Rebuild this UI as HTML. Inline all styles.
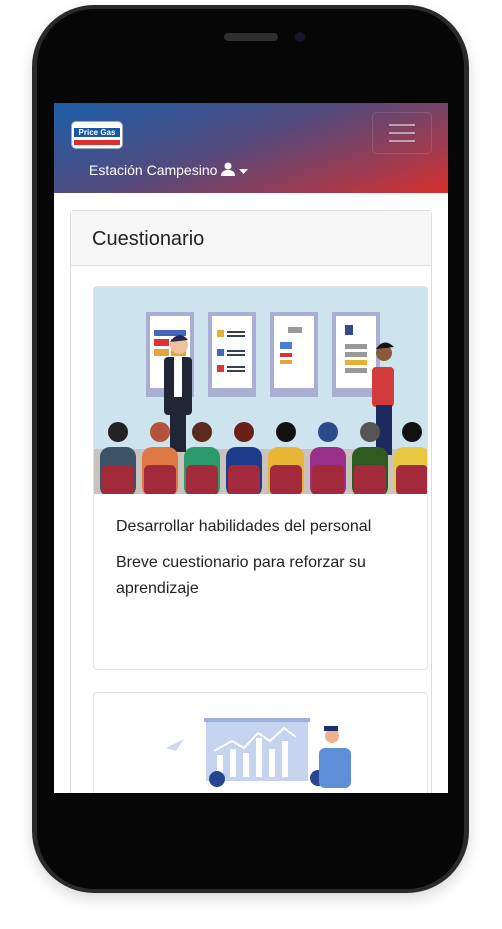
<!DOCTYPE html>
<html><head><meta charset="utf-8"><style>
body{margin:0;width:502px;height:929px;background:#fff;position:relative;overflow:hidden;font-family:"Liberation Sans",Arial,sans-serif}
.phone{position:absolute;left:32px;top:5px;width:437px;height:888px;border-radius:62px;background:#2a2a2a;box-shadow:0 6px 14px rgba(0,0,0,.15)}
.inner{position:absolute;left:5px;top:4px;right:5px;bottom:4px;border-radius:57px;background:#060606}
.spk{position:absolute;left:224px;top:33px;width:54px;height:8px;border-radius:4px;background:#2e2e2e}
.cam{position:absolute;left:295px;top:32px;width:10px;height:10px;border-radius:50%;background:#15152a}
.screen{position:absolute;left:54px;top:103px;width:394px;height:690px;background:#fff;overflow:hidden}
.hdr{height:90px;background:linear-gradient(160deg,#1d5fa8 0%,#524a7e 45%,#a33a4c 80%,#d9302c 100%);position:relative}
.logo{position:absolute;left:17px;top:18px;width:50px;height:26px;border-radius:5px;background:#fff;border:1px solid #9ab}
.logo i{position:absolute;left:2px;top:6px;right:2px;height:9px;background:#1856a6;color:#fff;font:bold 8px "Liberation Sans";font-style:normal;text-align:center;line-height:9px}
.logo b{position:absolute;left:2px;bottom:3px;right:2px;height:5px;background:#d8302a}
.tog{position:absolute;left:318px;top:9px;width:58px;height:40px;border:1px solid rgba(255,255,255,.12);border-radius:5px}
.tog span{position:absolute;left:16px;width:26px;height:2px;background:rgba(255,255,255,.5)}
.nav{position:absolute;left:35px;top:59px;color:#fff;font-size:14px}
.card{position:absolute;left:16px;top:107px;width:360px;height:600px;border:1px solid #ddd;border-radius:4px}
.ch{height:54px;background:#f7f7f7;border-bottom:1px solid #e3e3e3;font-size:20px;color:#222;padding-left:21px;line-height:56px}
.c1{position:absolute;left:39px;top:183px;width:333px;height:382px;border:1px solid #e3e3e3;border-radius:4px}
.img{position:absolute;left:0;top:0;width:333px;height:207px;background:#cde3ee;overflow:hidden}
.t{position:absolute;left:22px;font-size:16px;color:#222;line-height:26px}
.c2{position:absolute;left:39px;top:589px;width:333px;height:120px;border:1px solid #e3e3e3;border-radius:4px}
</style></head><body>
<div class="phone"><div class="inner"></div></div>
<div class="spk"></div><div class="cam"></div>
<div class="screen">
 <div class="hdr">
  <div class="logo"><i>Price Gas</i><b></b></div>
  <div class="tog"><span style="top:11px"></span><span style="top:19px"></span><span style="top:27px"></span></div>
  <div class="nav">Estación Campesino <svg width="14" height="14" viewBox="0 0 14 14" style="vertical-align:-1px"><circle cx="7" cy="4" r="3.5" fill="#fff"/><path d="M0 14 Q0 8 7 8 Q14 8 14 14Z" fill="#fff"/></svg> <svg width="9" height="6" viewBox="0 0 9 6"><path d="M0 0H9L4.5 5Z" fill="#fff"/></svg></div>
 </div>
 <div class="card"><div class="ch">Cuestionario</div></div>
 <div class="c1">
  <div class="img">
   <svg width="336" height="207" viewBox="0 0 336 207">
    <rect x="0" y="162" width="336" height="45" fill="#c9c3bb"/>
    <g fill="#a9aed3"><rect x="52" y="25" width="48" height="85"/><rect x="114" y="25" width="48" height="85"/><rect x="176" y="25" width="48" height="85"/><rect x="238" y="25" width="48" height="85"/></g>
    <g fill="#fff"><rect x="56" y="29" width="40" height="72"/><rect x="118" y="29" width="40" height="72"/><rect x="180" y="29" width="40" height="72"/><rect x="242" y="29" width="40" height="72"/></g>
    <rect x="60" y="43" width="32" height="6" fill="#4466bb"/><rect x="60" y="52" width="15" height="7" fill="#d33"/><rect x="77" y="52" width="15" height="7" fill="#d33"/><rect x="60" y="62" width="15" height="7" fill="#e8a23a"/><rect x="77" y="62" width="15" height="7" fill="#e8a23a"/>
    <rect x="123" y="43" width="7" height="7" fill="#e8b030"/><rect x="123" y="62" width="7" height="7" fill="#4466bb"/><rect x="123" y="78" width="7" height="7" fill="#d33"/>
    <g fill="#3a3f55"><rect x="133" y="44" width="18" height="2"/><rect x="133" y="48" width="18" height="2"/><rect x="133" y="63" width="18" height="2"/><rect x="133" y="67" width="18" height="2"/><rect x="133" y="79" width="18" height="2"/><rect x="133" y="83" width="18" height="2"/></g>
    <rect x="194" y="40" width="14" height="6" fill="#999"/><rect x="186" y="55" width="12" height="7" fill="#4a7fd0"/><rect x="186" y="66" width="12" height="4" fill="#d33"/><rect x="186" y="73" width="12" height="4" fill="#e8a23a"/>
    <rect x="251" y="38" width="8" height="10" fill="#334d8a"/><rect x="251" y="57" width="22" height="5" fill="#999"/><rect x="251" y="65" width="22" height="5" fill="#999"/><rect x="251" y="73" width="22" height="5" fill="#e8b030"/><rect x="251" y="81" width="22" height="5" fill="#999"/>
    <rect x="70" y="70" width="28" height="58" rx="4" fill="#202636"/><rect x="80" y="70" width="8" height="40" fill="#fff"/><circle cx="85" cy="58" r="9" fill="#f0c29c"/><path d="M76 55 Q85 42 94 53Z" fill="#2a2550"/><rect x="76" y="125" width="16" height="40" fill="#202636"/>
    <rect x="278" y="80" width="22" height="40" rx="4" fill="#d33a3c"/><circle cx="290" cy="66" r="8" fill="#8a5a3a"/><path d="M282 62 Q290 50 300 60Z" fill="#111"/><rect x="282" y="118" width="16" height="50" fill="#1d2a60"/>
    <g>
     <rect x="6" y="160" width="36" height="50" rx="10" fill="#3c5266"/><circle cx="24" cy="145" r="10" fill="#222"/>
     <rect x="48" y="160" width="36" height="50" rx="10" fill="#dd7a44"/><circle cx="66" cy="145" r="10" fill="#b5523a"/>
     <rect x="90" y="160" width="36" height="50" rx="10" fill="#2a9a6a"/><circle cx="108" cy="145" r="10" fill="#5a2a1a"/>
     <rect x="132" y="160" width="36" height="50" rx="10" fill="#1e3a8a"/><circle cx="150" cy="145" r="10" fill="#6a1f18"/>
     <rect x="174" y="160" width="36" height="50" rx="10" fill="#e8b535"/><circle cx="192" cy="145" r="10" fill="#111"/>
     <rect x="216" y="160" width="36" height="50" rx="10" fill="#9a2f8a"/><circle cx="234" cy="145" r="10" fill="#2a4a8a"/>
     <rect x="258" y="160" width="36" height="50" rx="10" fill="#2e5a20"/><circle cx="276" cy="145" r="10" fill="#555"/>
     <rect x="300" y="160" width="36" height="50" rx="10" fill="#e8c840"/><circle cx="318" cy="145" r="10" fill="#111"/>
    </g>
    <g fill="#a32a3a"><rect x="8" y="178" width="32" height="30" rx="5"/><rect x="50" y="178" width="32" height="30" rx="5"/><rect x="92" y="178" width="32" height="30" rx="5"/><rect x="134" y="178" width="32" height="30" rx="5"/><rect x="176" y="178" width="32" height="30" rx="5"/><rect x="218" y="178" width="32" height="30" rx="5"/><rect x="260" y="178" width="32" height="30" rx="5"/><rect x="302" y="178" width="32" height="30" rx="5"/></g>
   </svg>
  </div>
  <div class="t" style="top:227px">Desarrollar habilidades del personal</div>
  <div class="t" style="top:263px;width:300px">Breve cuestionario para reforzar su aprendizaje</div>
 </div>
 <div class="c2">
  <svg width="336" height="120" viewBox="0 0 336 120">
   <rect x="112" y="28" width="102" height="60" fill="#c5d3ee"/><rect x="110" y="25" width="106" height="4" fill="#9db0dc"/>
   <g fill="#fff"><rect x="123" y="62" width="6" height="22"/><rect x="136" y="56" width="6" height="28"/><rect x="149" y="60" width="6" height="24"/><rect x="162" y="45" width="6" height="39"/><rect x="175" y="56" width="6" height="28"/><rect x="188" y="48" width="6" height="36"/></g>
   <polyline points="120,58 138,48 150,55 164,40 176,48 190,35 202,44" fill="none" stroke="#fff" stroke-width="2"/>
   <circle cx="123" cy="86" r="8" fill="#2a4590"/><circle cx="224" cy="85" r="8" fill="#2a4590"/>
   <rect x="225" y="55" width="32" height="40" rx="6" fill="#5f8fd8"/><circle cx="238" cy="43" r="7" fill="#f1b18a"/><rect x="230" y="33" width="14" height="5" fill="#1d2f6a"/>
   <path d="M72 55 L90 46 L82 58Z" fill="#cfd8ee"/>
  </svg>
 </div>
</div>
</body></html>
